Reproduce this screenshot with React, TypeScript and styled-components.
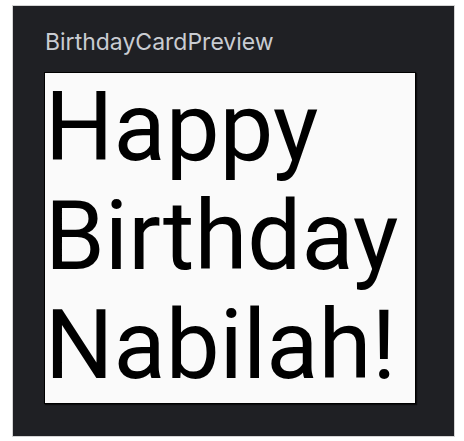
import React from 'react';
import { createGlobalStyle, styled } from 'styled-components';

const GlobalStyle = createGlobalStyle`
  html, body {
    margin: 0;
    padding: 0;
    background: #ffffff;
  }
`;

const Page = styled.div`
  padding: 5px 9px 4px 12px;
`;

const PreviewPanel = styled.div`
  background: #1f2024;
  border: 1px solid #d4d4d4;
  box-sizing: border-box;
  width: 443px;
  height: 432px;
  padding: 22px 0 0 31px;
  display: flex;
  flex-direction: column;
`;

const PreviewTitle = styled.div`
  font-family: Inter, 'Noto Sans', sans-serif;
  font-size: 23px;
  line-height: 28px;
  color: #c9ccd2;
  margin-left: 1px;
  margin-bottom: 16px;
`;

const Card = styled.div`
  width: 372px;
  box-sizing: border-box;
  background: #fafafa;
  border: 1px solid #000000;
  box-shadow: 1px 1px 1px rgba(0, 0, 0, 0.6);
  padding: 0 0 3px 0;
`;

const Greeting = styled.div`
  font-family: Roboto, 'Liberation Sans', sans-serif;
  font-size: 96px;
  line-height: 109px;
  color: #000000;
  white-space: nowrap;
`;

export default function App() {
  const lines = ['Happy', 'Birthday', 'Nabilah!'];
  return (
    <>
      <GlobalStyle />
      <Page>
        <PreviewPanel>
          <PreviewTitle>BirthdayCardPreview</PreviewTitle>
          <Card>
            {lines.map((line) => (
              <Greeting key={line}>{line}</Greeting>
            ))}
          </Card>
        </PreviewPanel>
      </Page>
    </>
  );
}
